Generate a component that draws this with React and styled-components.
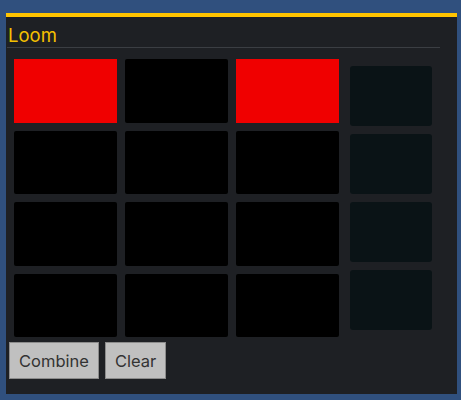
import React from "react";
import styled, { createGlobalStyle } from "styled-components";

const Global = createGlobalStyle`
  body {
    margin: 0;
    background: #30507e;
    font-family: Inter, "Noto Sans", sans-serif;
  }
`;

const Panel = styled.div`
  margin: 13px 0 0 6px;
  width: 451px;
  height: 381px;
  box-sizing: border-box;
  background: #1e2024;
  border-top: 4px solid #ffc400;
  display: flex;
  flex-direction: column;
`;

const Header = styled.div`
  margin: 0 17px 0 1px;
  padding: 7px 0 0 1px;
  height: 23px;
  border-bottom: 1px solid #3b3e43;
  color: #f5c000;
  font-size: 18.5px;
  line-height: 22px;
`;

const Body = styled.div`
  display: flex;
  align-items: flex-start;
  margin: 11px 0 0 8px;
`;

const Grid = styled.div`
  display: grid;
  grid-template-columns: repeat(3, 103px);
  grid-auto-rows: 63.5px;
  gap: 8px;
`;

const Cell = styled.div`
  background: ${(p) => (p.$on ? "#f00000" : "#000")};
  border-radius: ${(p) => (p.$on ? "0" : "2px")};
`;

const Side = styled.div`
  display: flex;
  flex-direction: column;
  gap: 8px;
  margin: 7px 0 0 11px;
`;

const Slot = styled.div`
  width: 82px;
  height: 60px;
  background: #0a1316;
  border-radius: 3px;
`;

const Buttons = styled.div`
  display: flex;
  gap: 6px;
  margin: 5px 0 0 3px;
`;

const Button = styled.button`
  height: 37px;
  padding: 0 9px;
  background: #c0c0c0;
  border: 1px solid #8c8c8c;
  color: #333;
  font-family: Inter, "Noto Sans", sans-serif;
  font-size: 16.5px;
  border-radius: 0;
`;

const cells = [true, false, true, false, false, false, false, false, false, false, false, false];

export default function App() {
  return (
    <>
      <Global />
      <Panel>
        <Header>Loom</Header>
        <Body>
          <Grid>
            {cells.map((on, i) => (
              <Cell key={i} $on={on} />
            ))}
          </Grid>
          <Side>
            {[0, 1, 2, 3].map((i) => (
              <Slot key={i} />
            ))}
          </Side>
        </Body>
        <Buttons>
          <Button>Combine</Button>
          <Button>Clear</Button>
        </Buttons>
      </Panel>
    </>
  );
}
